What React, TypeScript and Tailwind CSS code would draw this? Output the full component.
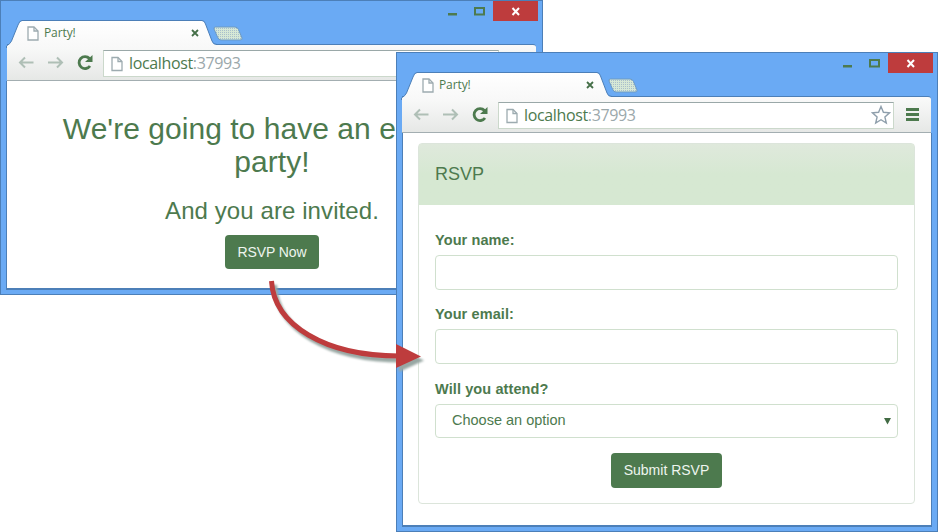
import type { ReactNode } from "react";

function PageIcon({ className }: { className: string }) {
  return (
    <svg viewBox="0 0 12 15" className={className} fill="#fff" stroke="#9dabb0" strokeWidth="1.3">
      <path d="M1 1H7L11 5V14H1Z" />
      <path d="M7 1V5H11" fill="none" />
    </svg>
  );
}

function TitleBar() {
  return (
    <div className="relative flex h-[44px] items-start">
      <svg className="absolute top-0 left-0" width="250" height="48" viewBox="0 0 250 48">
        <defs>
          <linearGradient id="tab" x1="0" y1="0" x2="0" y2="1">
            <stop offset="0" stopColor="#fff" />
            <stop offset="1" stopColor="#f8f8f8" />
          </linearGradient>
          <pattern id="dots" width="2" height="2" patternUnits="userSpaceOnUse">
            <rect width="2" height="2" fill="#d6e8d6" />
            <rect width="1" height="1" fill="#a9bfcb" />
          </pattern>
        </defs>
        <path d="M7 48V46Q10 44 11.500 41L18 25Q19.500 21 22 21H202Q204.500 21 205.500 24L212 41Q213 44.500 216 44.500V48Z" fill="url(#tab)" />
        <path d="M6.500 48V46Q10 44 11.500 41L18 25Q19.500 20.500 22 20.500H202Q204.500 20.500 205.500 24L212 41Q213 44.500 217 44.500" fill="none" stroke="#4c7fb8" />
        <path d="M215.500 27H235Q237.500 27 238.500 29.500L242 38Q242.500 40 240 40H221Q218.500 40 217.500 37L214 29Q213.500 27 215.500 27Z" fill="url(#dots)" stroke="#6c9ac5" />
      </svg>
      <div className="relative mt-[21px] flex h-[24px] w-[206px] items-center pl-[27px]">
        <PageIcon className="h-[15px] w-[12px]" />
        <span className="ml-[5px] flex-1 text-[12px] leading-[24px] tracking-[-0.1px]">Party!</span>
        <svg width="8" height="8" viewBox="0 0 8 8" className="mr-[7px]" stroke="#456f48" strokeWidth="1.8">
          <path d="M1 1L7 7M7 1L1 7" />
        </svg>
      </div>
      <div className="ml-auto flex pt-px pr-[5px]">
        <svg width="45" height="20" viewBox="0 0 45 20">
          <rect x="0" y="12" width="9" height="2.500" fill="#4d7a4e" />
          <rect x="27" y="7" width="9" height="6.500" fill="none" stroke="#4d7a4e" strokeWidth="2" />
        </svg>
        <svg width="45" height="20" viewBox="0 0 45 20" className="bg-[#be3c3d]">
          <path d="M19.500 7L26 14M26 7L19.500 14" stroke="#fff" strokeWidth="2" />
        </svg>
      </div>
    </div>
  );
}

function Toolbar() {
  return (
    <div className="flex h-[37px] items-start rounded-tr-[3px] border-t border-b border-t-[#4c7fb8] border-b-[#a3aeb1] bg-linear-to-b from-[#fafafa] to-[#e6e8e6]">
      <svg width="90" height="34" viewBox="0 0 90 34" className="ml-[7px] shrink-0" fill="none">
        <g stroke="#afbfb6" strokeWidth="2">
          <path d="M19.500 17.500H6M11 12.500L6 17.500L11 22.500" />
          <path d="M34 17.500H48M43 12.500L48 17.500L43 22.500" />
        </g>
        <path d="M76 21A6 6 0 1 1 75.500 13.500" stroke="#4d7a4e" strokeWidth="2.800" />
        <path d="M78.500 10V17H71Z" fill="#4d7a4e" />
      </svg>
      <div className="mt-[5px] -ml-px flex h-[27px] w-[396px] shrink-0 items-center border border-t-[#9aa8a8] border-r-[#cbd8cb] border-b-[#cbd8cb] border-l-[#cbd8cb] bg-white pr-[2px] pl-[7px]">
        <PageIcon className="h-[16px] w-[12px]" />
        <span className="ml-[6px] text-[16px] leading-[23px] tracking-[-0.36px] whitespace-nowrap">
          localhost<span className="text-[#9ba8ab]">:37993</span>
        </span>
        <svg width="20" height="20" viewBox="0 0 20 20" className="mb-px ml-auto" fill="#fff" stroke="#8f9fac" strokeWidth="1.400">
          <path d="M10 1.500L12.400 7.300L18.500 7.800L13.900 11.900L15.300 18L10 14.700L4.700 18L6.100 11.900L1.500 7.800L7.600 7.300Z" />
        </svg>
      </div>
      <svg width="13" height="13" viewBox="0 0 13 13" className="mt-[11px] ml-[12px] shrink-0" fill="#4d7a4e">
        <path d="M0 0H13V3H0ZM0 5H13V8H0ZM0 10H13V13H0Z" />
      </svg>
    </div>
  );
}

function BrowserWindow({ className, chrome, children }: { className: string; chrome: string; children: ReactNode }) {
  return (
    <section className={`absolute flex flex-col bg-[#6aaaf4] ring-1 ring-[#4c7fb8] ring-inset ${className}`}>
      <div className={`font-['Open_Sans','Noto_Sans',sans-serif] ${chrome}`}>
        <TitleBar />
        <div className="pr-[7px] pl-[7px]">
          <Toolbar />
        </div>
      </div>
      <div className="mx-[6px] mb-[5px] flex-1 border border-t-0 border-b-2 border-[#4c7fb8] bg-white font-['Liberation_Sans',Arial,sans-serif]">
        {children}
      </div>
    </section>
  );
}

function Field({ label, className }: { label: string; className: string }) {
  return (
    <label className={`block text-[14.500px] leading-[20px] font-bold tracking-[0.1px] ${className}`}>
      {label}
      <input className="mt-[5px] block h-[35px] w-full rounded-[4px] border border-[#d0e0ce] bg-white" />
    </label>
  );
}

export default function App() {
  return (
    <main className="relative h-[532px] w-[938px] overflow-hidden bg-white text-[#4d7a4e]">
      <BrowserWindow className="top-0 left-0 h-[295px] w-[543px]" chrome="">
        <div className="flex flex-col items-center pt-[31px] pl-px text-center">
          <h1 className="text-[30px] leading-[33px] tracking-[0.04px] whitespace-nowrap">
            We're going to have an exciting
            <br />
            party!
          </h1>
          <h3 className="mt-[19px] text-[24px] leading-[27px] tracking-[0.09px]">And you are invited.</h3>
          <button className="mt-[11px] h-[34px] w-[94px] rounded-[4px] bg-[#4d7a4e] text-[14px] tracking-[-0.1px] text-[#eef5ee]">RSVP Now</button>
        </div>
      </BrowserWindow>

      <BrowserWindow className="top-[52px] left-[396px] h-[480px] w-[542px]" chrome="-ml-px">
        <div className="pt-[10px] pr-[16px] pl-[15px]">
          <div className="h-[361px] rounded-[4px] border border-[#dce5db]">
            <h4 className="h-[61px] bg-linear-to-b from-[#dfe9dc] to-[#d6e8d2] to-50% px-[16px] text-[18px] leading-[60px]">RSVP</h4>
            <form className="flex flex-col px-[16px] pt-[25px]">
              <Field label="Your name:" className="mb-[14px]" />
              <Field label="Your email:" className="mb-[15px]" />
              <div className="text-[14.500px] leading-[20px] font-bold tracking-[0.1px]">Will you attend?</div>
              <div className="mt-[5px] flex h-[34px] items-center justify-between rounded-[4px] border border-[#d0e0ce] pr-[6px] pl-[16px] text-[14.500px]">
                <span>Choose an option</span>
                <svg width="7" height="7" viewBox="0 0 7 7" fill="#426b44">
                  <path d="M0 0H7L3.500 6.500Z" />
                </svg>
              </div>
              <button type="button" className="mt-[15px] h-[35px] w-[111px] self-center rounded-[4px] bg-[#4d7a4e] text-[14px] text-[#eef5ee]">
                Submit RSVP
              </button>
            </form>
          </div>
        </div>
      </BrowserWindow>

      <svg className="absolute top-[270px] left-[260px] drop-shadow-[3px_4px_1px_#98a7a3]" width="175" height="110" viewBox="260 270 175 110">
        <path d="M271.500 281C274 325 325 356 399 356" fill="none" stroke="#be3c3d" strokeWidth="5" />
        <path d="M396 344L421 356.500L396 368Z" fill="#be3c3d" />
      </svg>
    </main>
  );
}
